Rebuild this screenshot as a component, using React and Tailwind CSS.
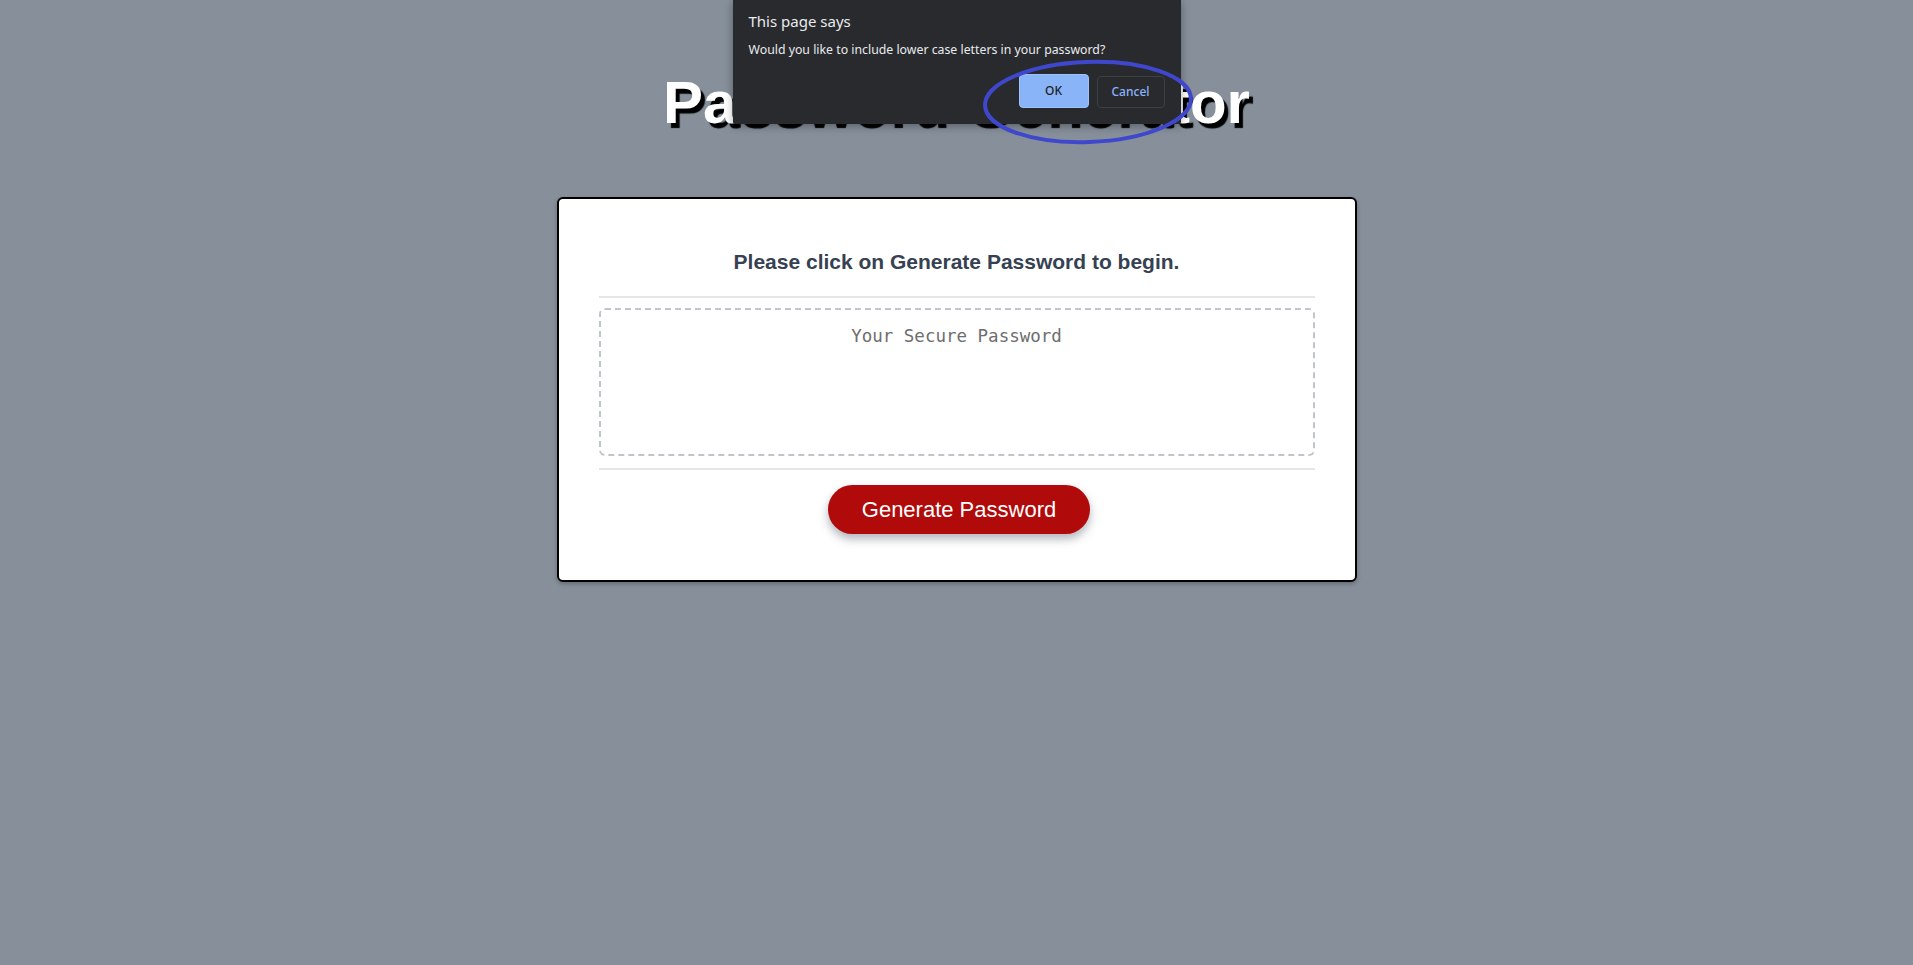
import React from 'react'

/**
 * Password generator page with the browser confirm() dialog open on top.
 */
const ConfirmDialog = () => {
    return (
        <div className="absolute inset-x-0 top-0 flex justify-center">
            <div className="w-[448px] h-[124px] bg-[#292a2d] rounded-b-[2px] shadow-[0_2px_8px_rgba(0,0,0,0.35)] px-4 pt-[11px] font-['Noto_Sans','Open_Sans',sans-serif]">
                <p className="text-[15px] leading-5 text-[#e8eaed]">This page says</p>
                <p className="mt-[10px] text-[12.3px] leading-[18px] text-[#e8eaed]">
                    Would you like to include lower case letters in your password?
                </p>
                <div className="mt-[15px] flex items-end justify-end gap-2">
                    <button className="w-[70px] h-[34px] rounded-[4px] bg-[#8ab4f8] border border-[#9ec1fa] text-[12px] font-medium text-[#202124]">
                        OK
                    </button>
                    <button className="w-[68px] h-[32px] rounded-[4px] border border-[#3c4043] text-[12px] font-medium text-[#8ab4f8]">
                        Cancel
                    </button>
                </div>
            </div>
        </div>
    )
}

// hand-drawn highlight circled around the OK button
const Highlight = () => (
    <svg className="absolute left-[980px] top-[57px] pointer-events-none" width="218" height="90" viewBox="0 0 218 90">
        <ellipse cx="108" cy="45" rx="103" ry="40" fill="none" stroke="#3f47cc" strokeWidth="4" transform="rotate(-2 108 45)" />
    </svg>
)

export default function App() {
    return (
        <div className="relative min-h-screen bg-[#868f9a] font-['Liberation_Sans',Arial,sans-serif]">
            <header className="pt-[73px] text-center">
                <h1 className="text-[60px] leading-[60px] font-bold text-white [text-shadow:4px_5px_1px_#000]">
                    Password Generator
                </h1>
            </header>

            <main className="mt-[64px] flex justify-center">
                <div className="w-[800px] bg-white border-2 border-black rounded-[6px] shadow-[0_2px_4px_rgba(0,0,0,0.25)] px-10 pt-[51px] pb-[46px]">
                    <h2 className="text-center text-[21px] leading-6 font-bold text-[#364152]">
                        Please click on Generate Password to begin.
                    </h2>

                    <div className="mt-[22px] h-[2px] bg-[#e6e6e6]" />

                    <textarea
                        readOnly
                        placeholder="Your Secure Password"
                        className="mt-[10px] block w-full h-[148px] resize-none rounded-[6px] border-2 border-dashed border-[#c0c5cc] pt-[13px] px-4 text-center text-[17.5px] font-['DejaVu_Sans_Mono',monospace] placeholder:text-[#6e6e6e] outline-none"
                    />

                    <div className="mt-[12px] h-[2px] bg-[#e6e6e6]" />

                    <div className="mt-[15px] flex justify-center">
                        <button className="ml-[5px] w-[262px] h-[49px] rounded-full bg-[#b10a0a] text-white text-[22px] shadow-[0_5px_10px_rgba(60,70,90,0.4)]">
                            Generate Password
                        </button>
                    </div>
                </div>
            </main>

            <ConfirmDialog />
            <Highlight />
        </div>
    )
}
